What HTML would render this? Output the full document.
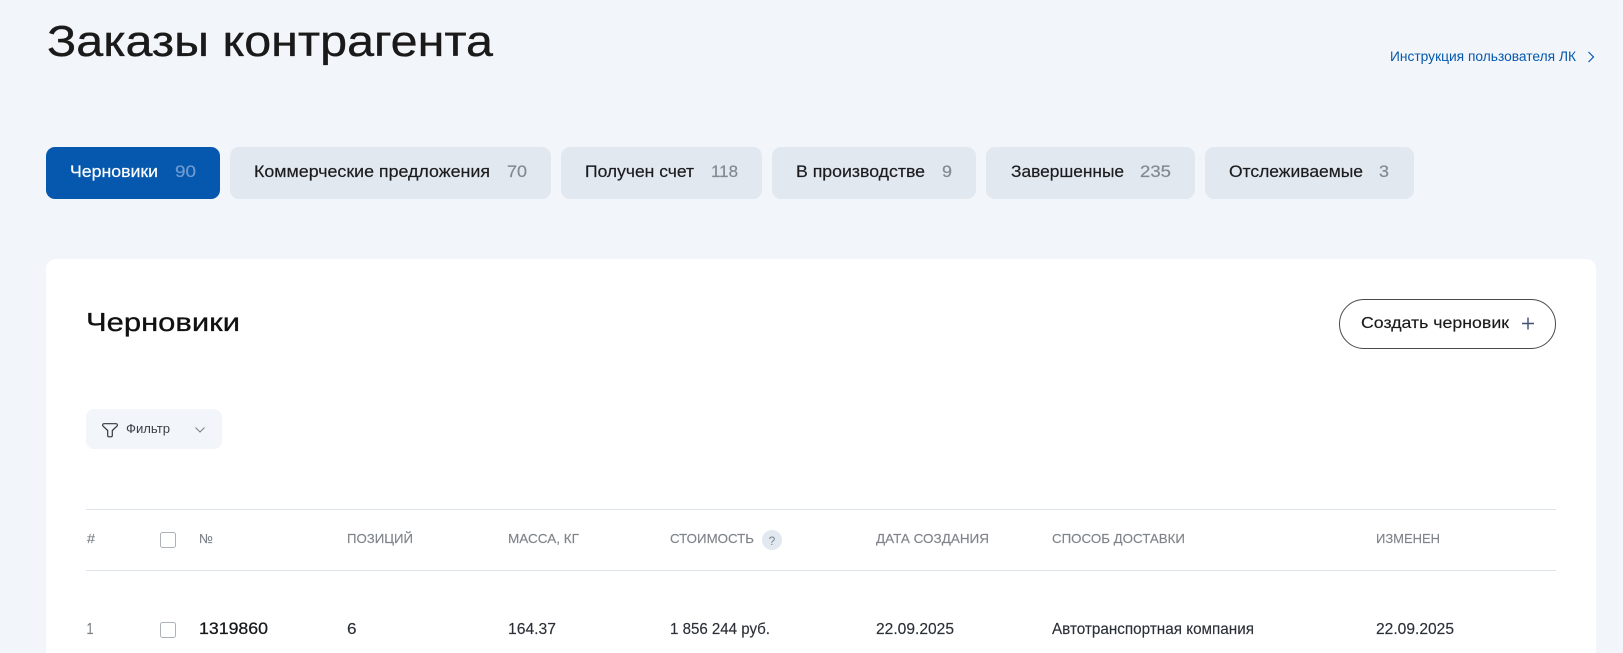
<!DOCTYPE html>
<html lang="ru">
<head>
<meta charset="utf-8">
<title>Заказы контрагента</title>
<style>
html,body{margin:0;padding:0;width:1623px;height:653px;overflow:hidden;background:#f2f5f9}
svg{display:block}
text{font-family:"Liberation Sans",sans-serif;white-space:pre}
.tab{font-size:17px;fill:#1d1d1f;stroke:#1d1d1f;stroke-width:.2px}
.cnt{font-size:17px;fill:#84898f;stroke:#84898f;stroke-width:.2px}
.th{font-size:13px;fill:#7f848a;stroke:#7f848a;stroke-width:.15px}
.td{font-size:16px;fill:#2b3037;stroke:#2b3037;stroke-width:.15px}
</style>
</head>
<body>
<svg width="1623" height="653" viewBox="0 0 1623 653" xmlns="http://www.w3.org/2000/svg">
<rect width="1623" height="653" fill="#f2f5f9"/>

<text x="47" y="56" font-size="44" fill="#1a1a1a" stroke="#1a1a1a" stroke-width=".35" textLength="446" lengthAdjust="spacingAndGlyphs">Заказы контрагента</text>

<text x="1390" y="61" font-size="13.5" fill="#0558ae" textLength="186" lengthAdjust="spacingAndGlyphs">Инструкция пользователя ЛК</text>
<path d="M1588.5 52 L1593.5 57 L1588.5 62" fill="none" stroke="#0558ae" stroke-width="1.2"/>

<rect x="46" y="147" width="174" height="52" rx="9" fill="#0558ae"/>
<rect x="230" y="147" width="321" height="52" rx="9" fill="#e1e8f0"/>
<rect x="561" y="147" width="201" height="52" rx="9" fill="#e1e8f0"/>
<rect x="772" y="147" width="204" height="52" rx="9" fill="#e1e8f0"/>
<rect x="986" y="147" width="209" height="52" rx="9" fill="#e1e8f0"/>
<rect x="1205" y="147" width="209" height="52" rx="9" fill="#e1e8f0"/>

<text class="tab" x="70" y="177" style="fill:#fff;stroke:#fff" textLength="88" lengthAdjust="spacingAndGlyphs">Черновики</text>
<text class="cnt" x="175" y="177" style="fill:#6f9ad0;stroke:#6f9ad0" textLength="21" lengthAdjust="spacingAndGlyphs">90</text>
<text class="tab" x="254" y="177" textLength="236" lengthAdjust="spacingAndGlyphs">Коммерческие предложения</text>
<text class="cnt" x="507" y="177" textLength="20" lengthAdjust="spacingAndGlyphs">70</text>
<text class="tab" x="585" y="177" textLength="109" lengthAdjust="spacingAndGlyphs">Получен счет</text>
<text class="cnt" x="711" y="177" textLength="27" lengthAdjust="spacingAndGlyphs">118</text>
<text class="tab" x="796" y="177" textLength="129" lengthAdjust="spacingAndGlyphs">В производстве</text>
<text class="cnt" x="942" y="177" textLength="10" lengthAdjust="spacingAndGlyphs">9</text>
<text class="tab" x="1011" y="177" textLength="113" lengthAdjust="spacingAndGlyphs">Завершенные</text>
<text class="cnt" x="1140" y="177" textLength="31" lengthAdjust="spacingAndGlyphs">235</text>
<text class="tab" x="1229" y="177" textLength="134" lengthAdjust="spacingAndGlyphs">Отслеживаемые</text>
<text class="cnt" x="1379" y="177" textLength="10" lengthAdjust="spacingAndGlyphs">3</text>

<path d="M46 665 V269 a10 10 0 0 1 10 -10 H1586 a10 10 0 0 1 10 10 V665 Z" fill="#fff"/>

<text x="86" y="331" font-size="26" fill="#111" stroke="#111" stroke-width=".3" textLength="154" lengthAdjust="spacingAndGlyphs">Черновики</text>

<rect x="1339.5" y="299.5" width="216" height="49" rx="24.5" fill="#fff" stroke="#4a4a4d" stroke-width="1"/>
<text x="1361" y="328" font-size="16" fill="#1a1a1a" stroke="#1a1a1a" stroke-width=".15" textLength="148" lengthAdjust="spacingAndGlyphs">Создать черновик</text>
<path d="M1522 323.5 H1534 M1528 317.5 V329.5" fill="none" stroke="#3f5070" stroke-width="1.4"/>

<rect x="86" y="409" width="136" height="40" rx="8" fill="#f2f5f9"/>
<path d="M104 423.7 H116 a1.4 1.4 0 0 1 1 2.4 L112.3 430.5 V435.5 a1.3 1.3 0 0 1 -1.3 1.3 H109 a1.3 1.3 0 0 1 -1.3 -1.3 V430.5 L103 426.1 a1.4 1.4 0 0 1 1 -2.4 Z" fill="none" stroke="#33373d" stroke-width="1.2" stroke-linejoin="round"/>
<text x="126" y="433" font-size="12.5" fill="#3a3f46" textLength="44" lengthAdjust="spacingAndGlyphs">Фильтр</text>
<path d="M195.5 427.5 L200 432 L204.5 427.5" fill="none" stroke="#7d8288" stroke-width="1.1"/>

<rect x="86" y="509" width="1470" height="1" fill="#dde3ea"/>
<rect x="86" y="570" width="1470" height="1" fill="#dde3ea"/>

<text class="th" x="87" y="543" textLength="8" lengthAdjust="spacingAndGlyphs">#</text>
<rect x="160.5" y="532.5" width="15" height="15" rx="2" fill="#fff" stroke="#adb2b9"/>
<text class="th" x="199" y="543" textLength="14" lengthAdjust="spacingAndGlyphs">№</text>
<text class="th" x="347" y="543" textLength="66" lengthAdjust="spacingAndGlyphs">ПОЗИЦИЙ</text>
<text class="th" x="508" y="543" textLength="71" lengthAdjust="spacingAndGlyphs">МАССА, КГ</text>
<text class="th" x="670" y="543" textLength="84" lengthAdjust="spacingAndGlyphs">СТОИМОСТЬ</text>
<circle cx="772" cy="540" r="10" fill="#e1e8f0"/>
<text x="772" y="545" font-size="12" fill="#7f848a" text-anchor="middle">?</text>
<text class="th" x="876" y="543" textLength="113" lengthAdjust="spacingAndGlyphs">ДАТА СОЗДАНИЯ</text>
<text class="th" x="1052" y="543" textLength="133" lengthAdjust="spacingAndGlyphs">СПОСОБ ДОСТАВКИ</text>
<text class="th" x="1376" y="543" textLength="64" lengthAdjust="spacingAndGlyphs">ИЗМЕНЕН</text>

<text class="td" x="86.5" y="634" style="fill:#7f848a;stroke:#7f848a" textLength="7" lengthAdjust="spacingAndGlyphs">1</text>
<rect x="160.5" y="622.5" width="15" height="15" rx="2" fill="#fff" stroke="#adb2b9"/>
<text x="199" y="634" font-size="17" fill="#15171a" stroke="#15171a" stroke-width=".25" textLength="69" lengthAdjust="spacingAndGlyphs">1319860</text>
<text class="td" x="347" y="634" textLength="9.5" lengthAdjust="spacingAndGlyphs">6</text>
<text class="td" x="508" y="634" textLength="48" lengthAdjust="spacingAndGlyphs">164.37</text>
<text class="td" x="670" y="634" textLength="100" lengthAdjust="spacingAndGlyphs">1 856 244 руб.</text>
<text class="td" x="876" y="634" textLength="78" lengthAdjust="spacingAndGlyphs">22.09.2025</text>
<text class="td" x="1052" y="634" textLength="202" lengthAdjust="spacingAndGlyphs">Автотранспортная компания</text>
<text class="td" x="1376" y="634" textLength="78" lengthAdjust="spacingAndGlyphs">22.09.2025</text>
</svg>
</body>
</html>
